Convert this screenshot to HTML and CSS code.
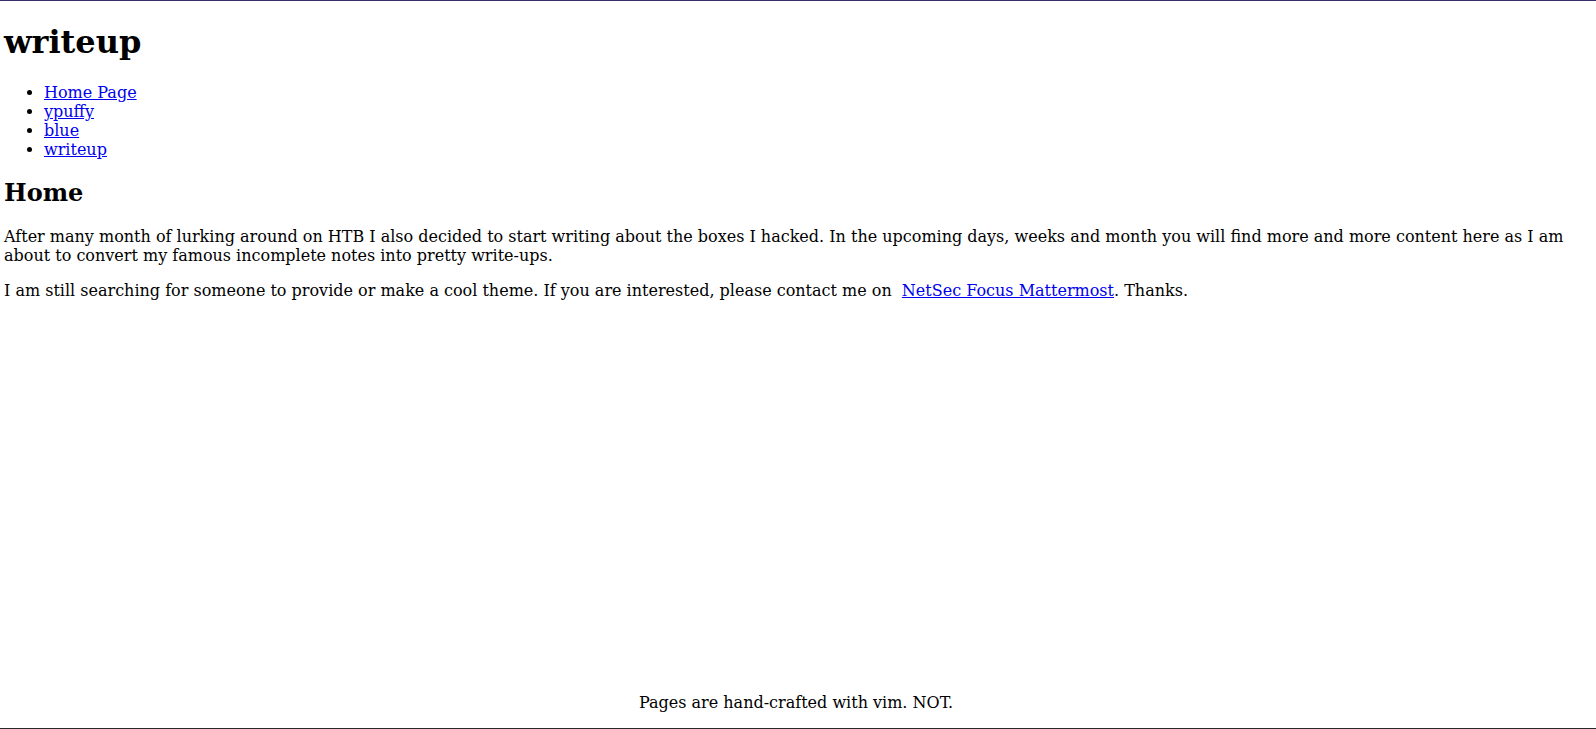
FILE: index.html
```html
<!DOCTYPE html>
<html lang="en">
<head>
<meta charset="utf-8">
<title>writeup</title>
<link rel="stylesheet" href="styles.css">
</head>
<body class="page">
<div class="main">
<h1 class="title">writeup</h1>
<ul class="nav">
<li><a href="#">Home Page</a></li>
<li><a href="#">ypuffy</a></li>
<li><a href="#">blue</a></li>
<li><a href="#">writeup</a></li>
</ul>
<h2 class="section">Home</h2>
<p class="text">After many month of lurking around on HTB I also decided to start writing about the boxes I hacked. In the upcoming days, weeks and month you will find more and more content here as I am about to convert my famous incomplete notes into pretty write-ups.</p>
<p class="text">I am still searching for someone to provide or make a cool theme. If you are interested, please contact me on&nbsp; <a href="#">NetSec Focus Mattermost</a>. Thanks.</p>
</div>
<footer class="footer">
<p class="footer-text">Pages are hand-crafted with vim. NOT.</p>
</footer>
</body>
</html>
```
FILE: styles.css
```css
html {
  height: 100%;
}
.page {
  margin: 0;
  padding: 0 4px;
  min-height: 100vh;
  box-sizing: border-box;
  border-top: 1px solid #392f6b;
  border-bottom: 1px solid #26282b;
  display: flex;
  flex-direction: column;
  font-family: "DejaVu Serif", serif;
  font-size: 16px;
  color: #000;
  background: #fff;
}
.main {
  display: block;
  padding-top: 1px;
}
.title {
  font-size: 32px;
  margin: 21.44px 0;
}
.nav {
  margin: 16px 0;
  padding-left: 40px;
}
.section {
  font-size: 24px;
  margin: 18.92px 0 19.92px;
}
.text {
  margin: 16px 0;
}
a {
  color: #0000ee;
}
.footer {
  margin-top: auto;
  padding-right: 4px;
  text-align: center;
}
.footer-text {
  margin: 16px 0;
}
```
